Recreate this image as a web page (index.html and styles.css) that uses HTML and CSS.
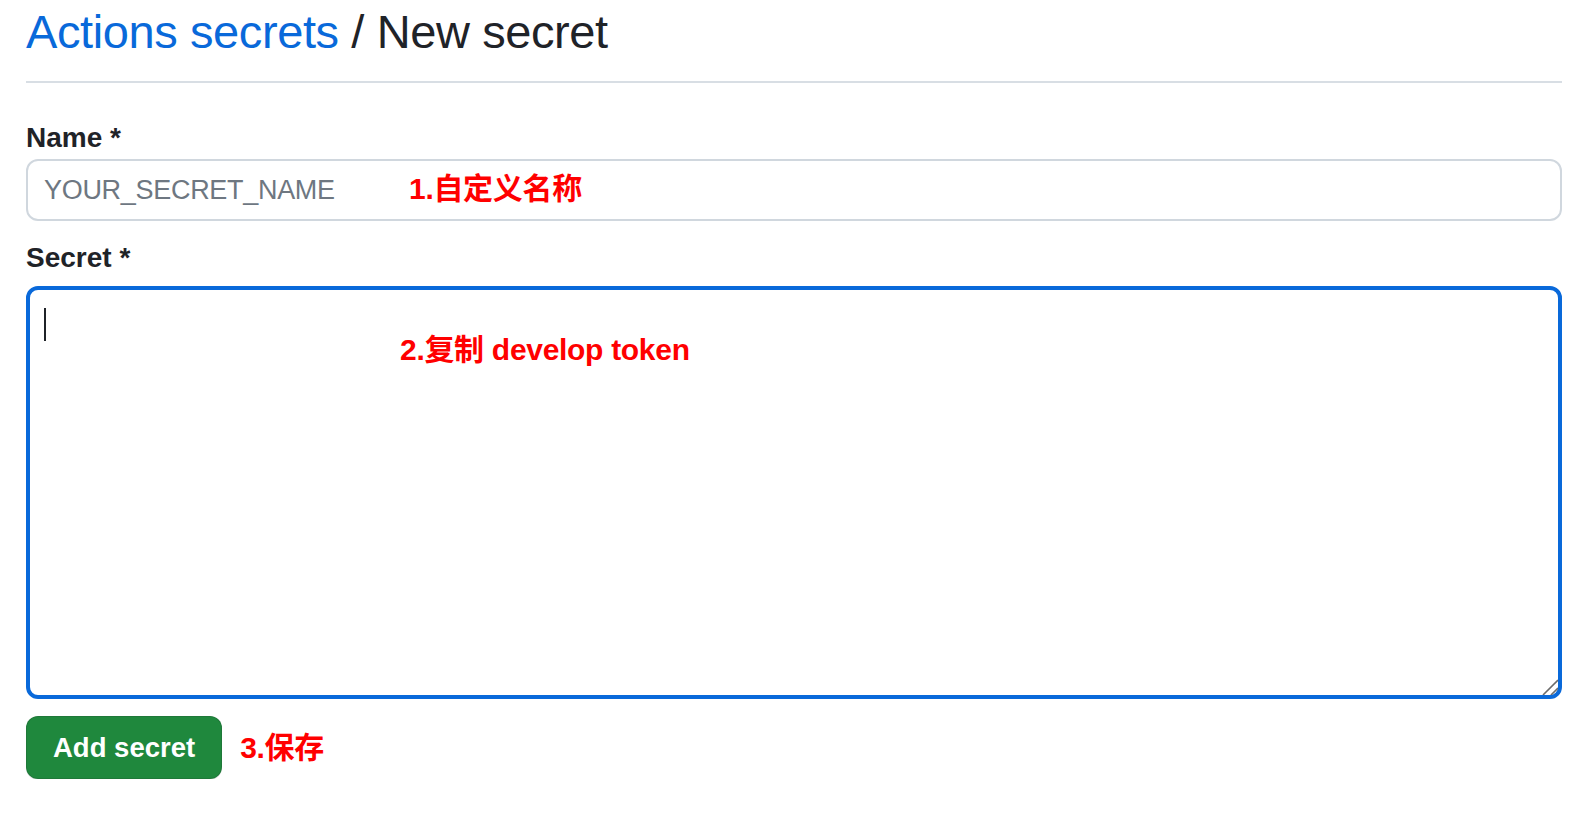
FILE: index.html
```html
<!DOCTYPE html>
<html lang="zh-CN">
<head>
<meta charset="utf-8">
<title>New secret</title>
<link rel="stylesheet" href="styles.css">
</head>
<body>
<main class="page">
  <header class="page-header">
    <h1 class="title"><a class="crumb" href="#">Actions secrets</a> / New secret</h1>
  </header>
  <form class="secret-form">
    <label class="field-label" for="name">Name *</label>
    <div class="field-wrap">
      <input class="text-input" id="name" type="text" placeholder="YOUR_SECRET_NAME">
      <span class="note note-name">1.自定义名称</span>
    </div>
    <label class="field-label label-secret" for="secret">Secret *</label>
    <div class="field-wrap">
      <textarea class="text-area" id="secret"></textarea>
      <span class="caret"></span>
      <span class="note note-secret">2.复制 develop token</span>
      <svg class="resize-grip" viewBox="0 0 16 16" width="16" height="16" aria-hidden="true">
        <line x1="1" y1="16" x2="16" y2="1" stroke="#6b6b6b" stroke-width="1.6"/>
        <line x1="9" y1="16" x2="16" y2="9" stroke="#6b6b6b" stroke-width="1.6"/>
      </svg>
    </div>
    <div class="actions">
      <button class="btn-primary" type="button">Add secret</button>
      <span class="note note-save">3.保存</span>
    </div>
  </form>
</main>
</body>
</html>
```
FILE: styles.css
```css
html, body {
  margin: 0;
  padding: 0;
  background: #ffffff;
}

body {
  font-family: "Liberation Sans", "Noto Sans CJK SC", sans-serif;
  color: #1f2328;
}

.page {
  padding: 0 24px 0 26px;
}

.page-header {
  padding-bottom: 17px;
  border-bottom: 2px solid #d8dee4;
}

.title {
  margin: 0;
  font-size: 47px;
  line-height: 64px;
  font-weight: 400;
  letter-spacing: -0.4px;
  color: #1f2328;
}

.crumb {
  color: #0969da;
  text-decoration: none;
}

.secret-form {
  display: flex;
  flex-direction: column;
}

.field-label {
  display: block;
  font-size: 28px;
  line-height: 32px;
  font-weight: 700;
  margin-top: 39px;
  margin-bottom: 5px;
}

.label-secret {
  margin-top: 21px;
  margin-bottom: 12px;
}

.field-wrap {
  position: relative;
}

.text-input {
  display: block;
  width: 100%;
  box-sizing: border-box;
  height: 62px;
  margin: 0;
  padding: 0 16px;
  border: 2px solid #d0d7de;
  border-radius: 12px;
  background: #ffffff;
  font-family: "Liberation Sans", sans-serif;
  font-size: 27px;
  letter-spacing: -0.3px;
  color: #1f2328;
  outline: none;
}

.text-input::placeholder {
  color: #6e7781;
}

.text-area {
  display: block;
  width: 100%;
  box-sizing: border-box;
  height: 413px;
  margin: 0;
  padding: 16px;
  border: 4px solid #0969da;
  border-radius: 12px;
  background: #ffffff;
  font-family: "Liberation Sans", sans-serif;
  font-size: 27px;
  resize: none;
  outline: none;
}

.caret {
  position: absolute;
  left: 18px;
  top: 22px;
  width: 2px;
  height: 33px;
  background: #1f2328;
}

.resize-grip {
  position: absolute;
  right: 4px;
  bottom: 4px;
}

.note {
  color: #ff0000;
  font-family: "Liberation Sans", "Noto Sans CJK SC", sans-serif;
  font-weight: 700;
  font-size: 30px;
  letter-spacing: -0.3px;
  white-space: nowrap;
}

.note-name {
  position: absolute;
  left: 383px;
  top: -1px;
  line-height: 62px;
}

.note-secret {
  position: absolute;
  left: 374px;
  top: 44px;
  line-height: 40px;
}

.actions {
  display: flex;
  align-items: center;
  gap: 18px;
  margin-top: 17px;
}

.btn-primary {
  height: 63px;
  padding: 0 26px;
  border: 1px solid rgba(31, 35, 40, 0.15);
  border-radius: 12px;
  background: #1f883d;
  color: #ffffff;
  font-family: "Liberation Sans", sans-serif;
  font-size: 27.5px;
  font-weight: 700;
  box-shadow: 0 1px 0 rgba(31, 35, 40, 0.1);
  cursor: pointer;
}

.note-save {
  line-height: 40px;
}
```
